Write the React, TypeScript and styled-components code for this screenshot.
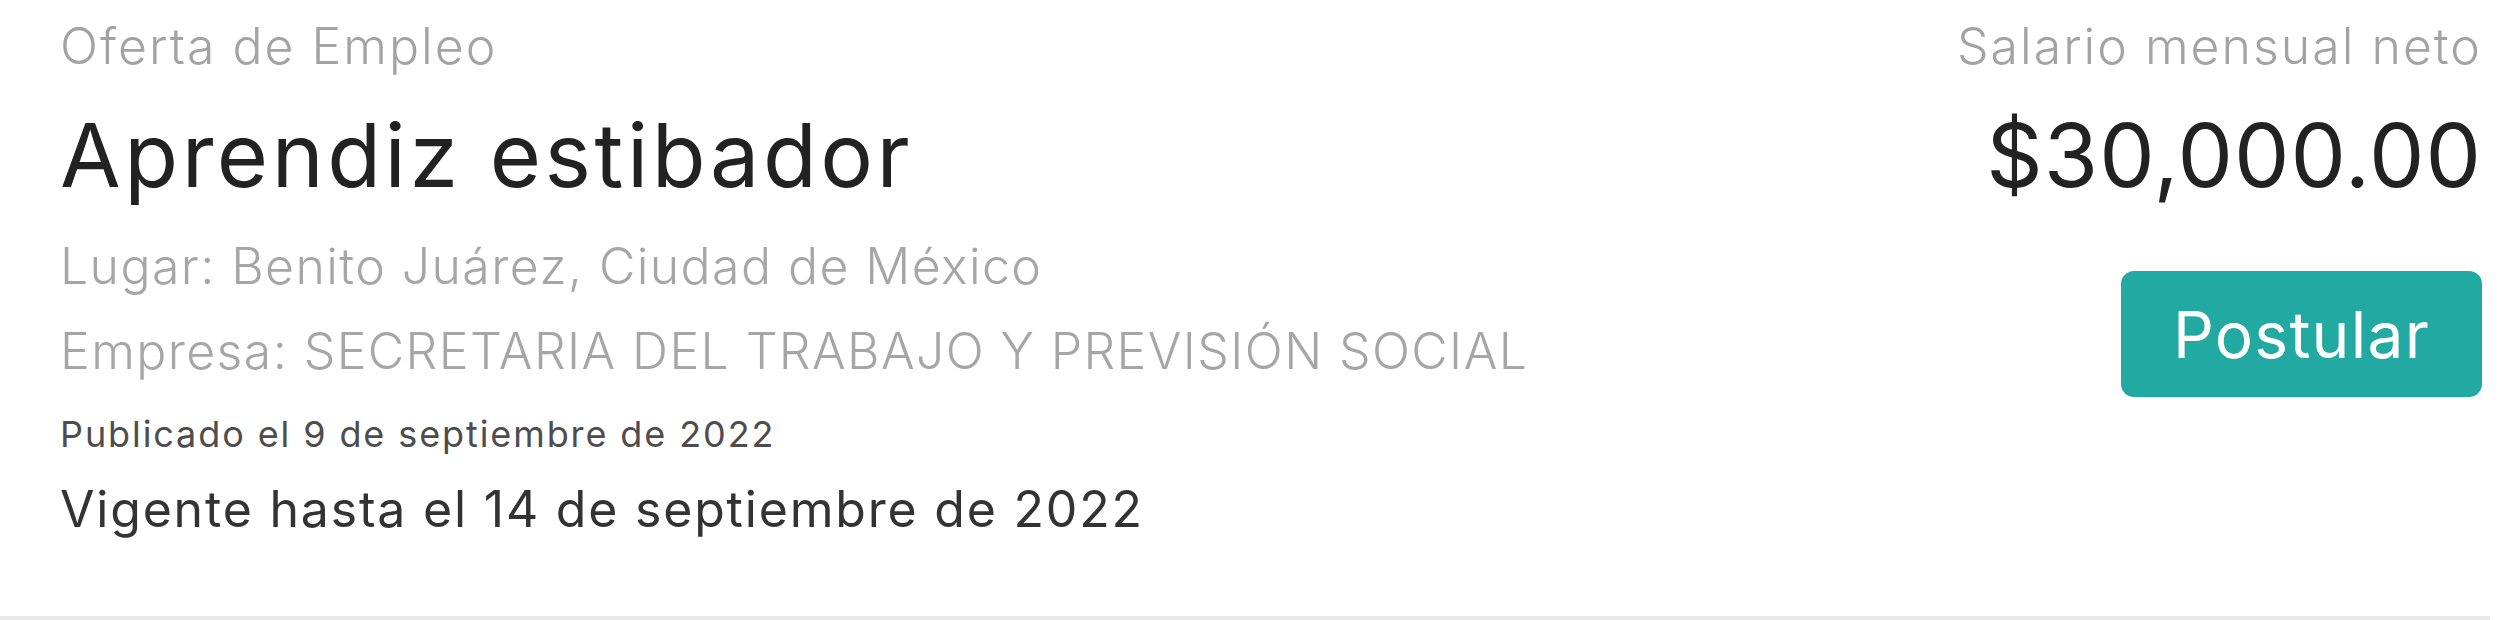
import React from "react";
import styled, { createGlobalStyle } from "styled-components";

const GlobalStyle = createGlobalStyle`
  html, body {
    margin: 0;
    padding: 0;
    background: #ffffff;
  }

  body {
    font-family: Inter, "Noto Sans", "DejaVu Sans", sans-serif;
    -webkit-font-smoothing: antialiased;
  }
`;

const OfferCard = styled.section`
  box-sizing: border-box;
  width: calc(100% - 15px);
  height: 620px;
  padding: 6px 8px 0 60px;
  display: flex;
  justify-content: space-between;
  align-items: flex-start;
  background: #ffffff;
  border-bottom: 4px solid #e8e8e8;
`;

const InfoColumn = styled.div`
  display: flex;
  flex-direction: column;
`;

const SalaryColumn = styled.div`
  display: flex;
  flex-direction: column;
  align-items: flex-end;
`;

const Caption = styled.span`
  font-size: 50px;
  line-height: 80px;
  font-weight: 300;
  color: #a3a3a3;
  letter-spacing: 0.04em;
  white-space: nowrap;
`;

const Title = styled.h1<{ $spacing?: string }>`
  margin: 0;
  font-size: 88px;
  line-height: 138px;
  font-weight: 400;
  color: #222222;
  letter-spacing: ${(p) => p.$spacing ?? "0.04em"};
  white-space: nowrap;
`;

const Detail = styled.span`
  font-size: 50px;
  line-height: 85px;
  font-weight: 300;
  color: #a6a6a6;
  letter-spacing: 1.4px;
  white-space: nowrap;
`;

const Published = styled.span`
  font-size: 36px;
  line-height: 80px;
  font-weight: 400;
  color: #4d4d4d;
  letter-spacing: 1.9px;
  white-space: nowrap;
`;

const Validity = styled.span`
  font-size: 50px;
  line-height: 70px;
  font-weight: 400;
  color: #333333;
  letter-spacing: 1.8px;
  white-space: nowrap;
`;

const ApplyButton = styled.button`
  margin-top: 47px;
  width: 361px;
  height: 126px;
  display: flex;
  align-items: center;
  justify-content: center;
  border: none;
  border-radius: 13px;
  background: #22a9a2;
  color: #ffffff;
  font-family: inherit;
  font-size: 64px;
  font-weight: 400;
  letter-spacing: 0.02em;
  cursor: pointer;
`;

const App = () => {
  return (
    <>
      <GlobalStyle />
      <OfferCard>
        <InfoColumn>
          <Caption>Oferta de Empleo</Caption>
          <Title>Aprendiz estibador</Title>
          <Detail>Lugar: Benito Juárez, Ciudad de México</Detail>
          <Detail>Empresa: SECRETARIA DEL TRABAJO Y PREVISIÓN SOCIAL</Detail>
          <Published>Publicado el 9 de septiembre de 2022</Published>
          <Validity>Vigente hasta el 14 de septiembre de 2022</Validity>
        </InfoColumn>
        <SalaryColumn>
          <Caption>Salario mensual neto</Caption>
          <Title $spacing="1px">$30,000.00</Title>
          <ApplyButton>Postular</ApplyButton>
        </SalaryColumn>
      </OfferCard>
    </>
  );
};

export default App;
